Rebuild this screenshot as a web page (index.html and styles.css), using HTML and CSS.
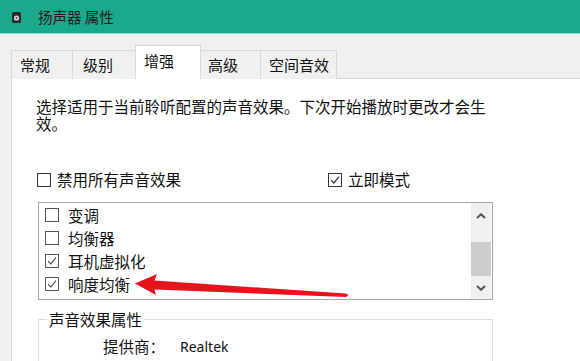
FILE: index.html
```html
<!DOCTYPE html>
<html lang="zh-CN">
<head>
<meta charset="utf-8">
<title>扬声器 属性</title>
<link rel="stylesheet" href="styles.css">
</head>
<body>
<div class="window">
  <div class="titlebar">
    <svg class="title-icon" width="9" height="11" viewBox="0 0 9 11">
      <rect x="0" y="0" width="9" height="11" rx="1.5" fill="#2b2b2b"/>
      <circle cx="4.5" cy="6" r="2.6" fill="#d8d8d8"/>
      <circle cx="4.5" cy="6" r="1" fill="#555"/>
    </svg>
    <span class="title">扬声器 属性</span>
  </div>
  <div class="tabs">
    <div class="tab tab-general">常规</div>
    <div class="tab tab-levels">级别</div>
    <div class="tab tab-enh active">增强</div>
    <div class="tab tab-adv">高级</div>
    <div class="tab tab-spatial">空间音效</div>
  </div>
  <div class="panel">
    <p class="desc">选择适用于当前聆听配置的声音效果。下次开始播放时更改才会生效。</p>
    <div class="opts">
      <label class="chk chk-first"><span class="box"></span>禁用所有声音效果</label>
      <label class="chk"><span class="box"><svg width="12" height="12" viewBox="0 0 12 12"><polyline points="2,6.2 4.8,9 10,2.6" fill="none" stroke="#333" stroke-width="1.2"/></svg></span>立即模式</label>
    </div>
    <div class="listbox">
      <ul class="items">
        <li class="item"><span class="box"></span>变调</li>
        <li class="item"><span class="box"></span>均衡器</li>
        <li class="item"><span class="box"><svg width="12" height="12" viewBox="0 0 12 12"><polyline points="2,6.2 4.8,9 10,2.6" fill="none" stroke="#444" stroke-width="1.1"/></svg></span>耳机虚拟化</li>
        <li class="item"><span class="box"><svg width="12" height="12" viewBox="0 0 12 12"><polyline points="2,6.2 4.8,9 10,2.6" fill="none" stroke="#444" stroke-width="1.1"/></svg></span>响度均衡</li>
      </ul>
      <div class="scrollbar">
        <div class="sb-btn sb-up"><svg width="10" height="6" viewBox="0 0 10 6"><polyline points="1,5 5,1.2 9,5" fill="none" stroke="#555" stroke-width="2"/></svg></div>
        <div class="sb-track"><div class="sb-thumb"></div></div>
        <div class="sb-btn sb-down"><svg width="10" height="6" viewBox="0 0 10 6"><polyline points="1,1 5,4.8 9,1" fill="none" stroke="#555" stroke-width="2"/></svg></div>
      </div>
    </div>
    <fieldset class="group">
      <legend class="group-label">声音效果属性</legend>
      <div class="prop"><span class="key">提供商：</span><span class="val">Realtek</span></div>
    </fieldset>
  </div>
  <svg class="annot-arrow" width="580" height="361" viewBox="0 0 580 361">
    <polygon points="135,283.5 157,274 154.5,280.5 346,293.6 348.5,295.3 346,297 154.5,289.5 156,295" fill="#e5141c"/>
  </svg>
</div>
</body>
</html>
```

FILE: styles.css
```css
* { box-sizing: border-box; }
html, body {
  margin: 0;
  padding: 0;
  background: #f0f0f0;
  overflow: hidden;
}
body {
  font-family: "Noto Sans CJK SC", "Noto Sans", sans-serif;
  color: #111;
}
.window {
  position: relative;
  width: 580px;
  height: 361px;
  overflow: hidden;
}
.titlebar {
  height: 34px;
  background: #1ba98c;
  display: flex;
  align-items: center;
  padding-left: 12px;
  border-bottom: 1px solid #8fd9c8;
}
.title-icon { display: block; margin-top: 1px; }
.title {
  margin-left: 17px;
  font-size: 14.5px;
  color: #202020;
  line-height: 17px;
}
.tabs {
  display: flex;
  align-items: flex-end;
  margin-top: 11px;
  padding-left: 11px;
  height: 34px;
  margin-bottom: -1px;
}
.tab {
  height: 29px;
  border: 1px solid #d9d9d9;
  border-bottom: none;
  background: #f0f0f0;
  font-size: 15px;
  line-height: 27px;
  padding-left: 8px;
  margin-right: -1px;
}
.tab-general { width: 62px; }
.tab-levels { width: 64px; padding-left: 10px; }
.tab-enh { width: 66px; }
.tab-adv { width: 61px; padding-left: 7px; }
.tab-spatial { width: 77px; }
.tab.active {
  height: 34px;
  background: #fff;
  line-height: 30px;
  position: relative;
  z-index: 1;
}
.panel {
  margin-left: 11px;
  height: 300px;
  background: #fff;
  border: 1px solid #d9d9d9;
  border-right: none;
  padding: 19px 0 0 24px;
}
.desc {
  margin: 0;
  width: 460px;
  font-size: 15.5px;
  line-height: 17px;
}
.opts {
  display: flex;
  margin-top: 39px;
}
.chk {
  display: flex;
  align-items: center;
  font-size: 15.5px;
  line-height: 17px;
}
.chk-first { width: 291px; }
.box {
  width: 14px;
  height: 14px;
  border: 1px solid #333;
  background: #fff;
  display: flex;
  align-items: center;
  justify-content: center;
  margin-left: 1px;
  margin-right: 6px;
  flex: none;
}
.box svg { display: block; }
.listbox {
  margin-top: 14px;
  margin-left: 2px;
  width: 455px;
  height: 98px;
  border: 1px solid #a6a6a6;
  display: flex;
}
.items {
  list-style: none;
  margin: 0;
  padding: 0 0 0 6px;
  flex: 1;
}
.item {
  height: 23px;
  display: flex;
  align-items: center;
  font-size: 15.5px;
}
.item .box {
  border-color: #555;
  margin-left: 0;
  margin-right: 9px;
}
.scrollbar {
  width: 20px;
  margin-right: 1px;
  background: #f0f0f0;
  display: flex;
  flex-direction: column;
}
.sb-btn {
  display: flex;
  align-items: center;
  justify-content: center;
}
.sb-up { height: 26px; }
.sb-down { height: 22px; }
.sb-track {
  flex: 1;
  padding-top: 13px;
}
.sb-thumb {
  height: 34px;
  background: #cdcdcd;
}
.group {
  margin: 11px 0 0 2px;
  width: 455px;
  height: 80px;
  border: 1px solid #dcdcdc;
  padding: 0 0 0 8px;
  min-inline-size: 0;
}
.group-label {
  padding: 0 2px;
  font-size: 15.5px;
  line-height: 17px;
}
.prop {
  display: flex;
  align-items: center;
  margin-top: 10px;
  margin-left: 56px;
  line-height: 17px;
}
.key { font-size: 15.5px; }
.val {
  margin-left: 15px;
  font-family: "Noto Sans", "Open Sans", sans-serif;
  font-size: 14px;
}
.annot-arrow {
  position: absolute;
  left: 0;
  top: 0;
  pointer-events: none;
}
```
